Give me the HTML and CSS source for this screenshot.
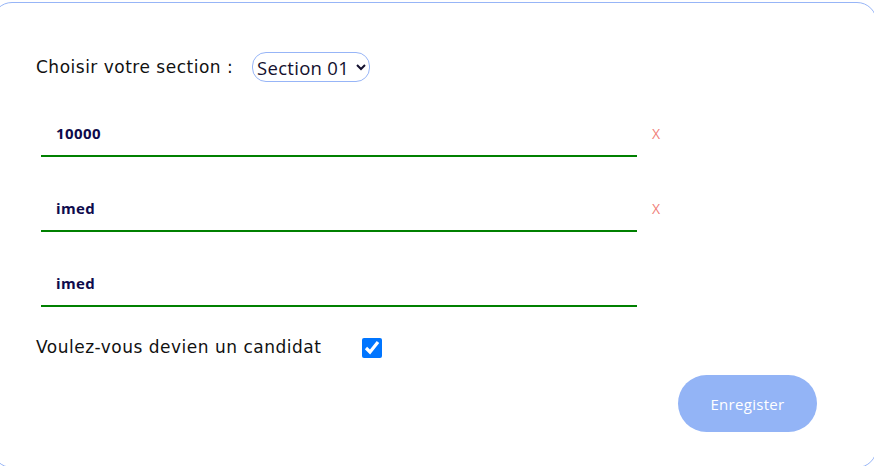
FILE: index.html
```html
<!DOCTYPE html>
<html lang="fr">
<head>
<meta charset="utf-8">
<title>Formulaire</title>
<link rel="stylesheet" href="styles.css">
</head>
<body>
<div class="card">
  <form class="form">
    <div class="row section-row">
      <label class="label section-label" for="section">Choisir votre section :</label>
      <select id="section" class="select">
        <option>Section 01</option>
        <option>Section 02</option>
      </select>
    </div>
    <div class="field">
      <input class="input" type="text" value="10000">
      <span class="clear">X</span>
    </div>
    <div class="field">
      <input class="input" type="text" value="imed">
      <span class="clear">X</span>
    </div>
    <div class="field">
      <input class="input" type="text" value="imed" autofocus>
    </div>
    <div class="row check-row">
      <label class="label check-label" for="cand">Voulez-vous devien un candidat</label>
      <input id="cand" class="check" type="checkbox" checked>
    </div>
    <div class="actions">
      <button type="button" class="btn">Enregister</button>
    </div>
  </form>
</div>
</body>
</html>
```
FILE: styles.css
```css
html, body {
  margin: 0;
  padding: 0;
  background: #ffffff;
  overflow: hidden;
}

body {
  font-family: "Open Sans", "Liberation Sans", sans-serif;
  color: #111111;
}

.card {
  box-sizing: border-box;
  margin: 2px 0 0 -8px;
  width: 885px;
  height: 466px;
  border: 1px solid #97b5f7;
  border-radius: 20px;
  padding: 49px 0 0 43px;
  background: #ffffff;
}

.form {
  width: 781px;
  display: flex;
  flex-direction: column;
}

.row {
  display: flex;
  align-items: center;
}

.label {
  font-family: "DejaVu Sans", "Open Sans", sans-serif;
  font-size: 17px;
  letter-spacing: 0.5px;
  color: #111111;
}

.section-label {
  width: 216px;
  flex: none;
}

.select {
  box-sizing: border-box;
  height: 30px;
  width: 118px;
  border: 1px solid #97b5f7;
  border-radius: 14px;
  background: #ffffff;
  font-family: "Open Sans", sans-serif;
  font-size: 18.5px;
  letter-spacing: 0.3px;
  color: #13102e;
  padding: 0;
  outline: none;
}

.field {
  display: flex;
  align-items: center;
  margin-top: 31px;
  padding-left: 5px;
}

.input {
  box-sizing: border-box;
  width: 596px;
  height: 44px;
  border: none;
  border-bottom: 2px solid #008000;
  padding: 0 15px 2px 15px;
  font-family: inherit;
  font-size: 15px;
  font-weight: 700;
  letter-spacing: 0.4px;
  color: #0e0b4c;
  caret-color: #0e0b4c;
  background: transparent;
  outline: none;
}

.clear {
  margin-left: 15px;
  font-size: 14px;
  color: #f07f7a;
  line-height: 1;
  margin-bottom: 2px;
}

.check-row {
  margin-top: 30px;
  height: 22px;
}

.check-label {
  width: 326px;
  flex: none;
  margin-bottom: 3px;
}

.check {
  width: 20px;
  height: 20px;
  margin: 0;
}

.actions {
  display: flex;
  justify-content: flex-end;
  margin-top: 16px;
}

.btn {
  width: 139px;
  height: 57px;
  border: none;
  border-radius: 29px;
  background: #93b4f6;
  color: #ffffff;
  font-family: inherit;
  font-size: 15px;
  font-weight: 500;
  letter-spacing: 0.3px;
}
```
